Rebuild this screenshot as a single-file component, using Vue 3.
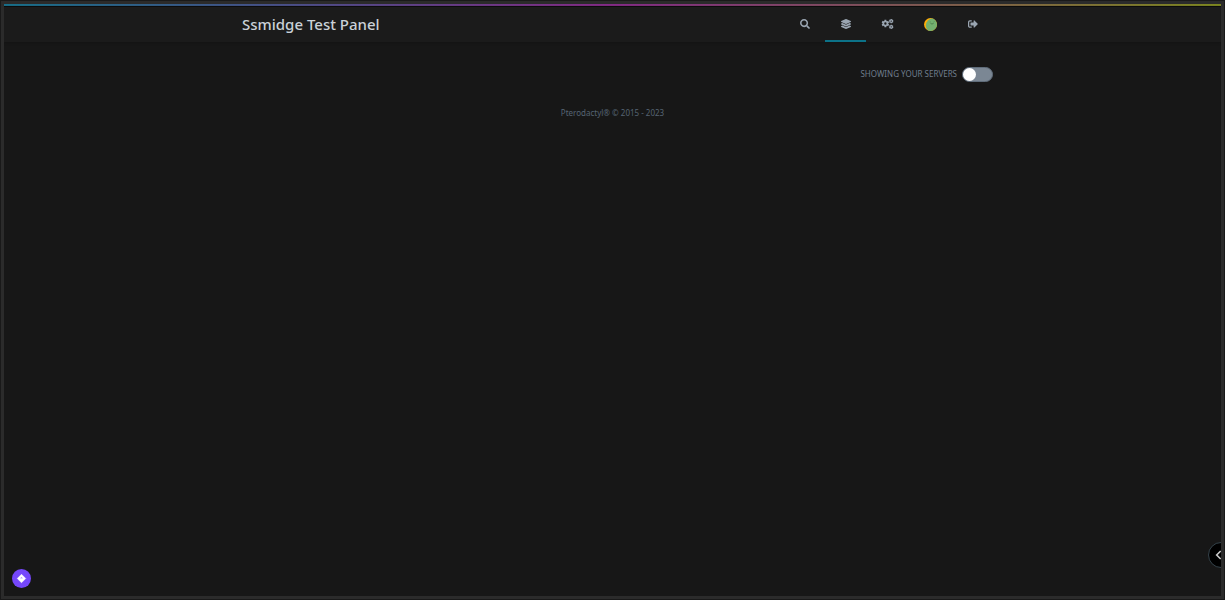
<script setup>
import { ref } from 'vue'

const showOthers = ref(false)
</script>

<template>
  <div class="frame">
    <div class="screen">
      <div class="progress"></div>
      <header class="topbar">
        <div class="container bar">
          <a href="#" class="brand">Ssmidge Test Panel</a>
          <nav class="nav" aria-label="Main">
            <button type="button" class="item" aria-label="Search">
              <svg viewBox="0 0 512 512" class="icon"><path d="M505 442.700L405.300 343c-4.500-4.500-10.600-7-17-7H372c27.600-35.300 44-79.700 44-128C416 93.100 322.900 0 208 0S0 93.100 0 208s93.100 208 208 208c48.300 0 92.700-16.400 128-44v16.300c0 6.400 2.500 12.500 7 17l99.700 99.700c9.400 9.400 24.600 9.400 33.900 0l28.300-28.300c9.400-9.400 9.400-24.600.1-34zM208 336c-70.700 0-128-57.200-128-128 0-70.700 57.200-128 128-128 70.700 0 128 57.200 128 128 0 70.700-57.200 128-128 128z" /></svg>
            </button>
            <a href="#" class="item active" aria-label="Dashboard">
              <svg viewBox="0 0 512 512" class="icon"><path d="M12.400 148l232.900 105.700c6.800 3.100 14.500 3.100 21.300 0L499.600 148c16.600-7.500 16.600-32.500 0-40L266.600 2.300a25.600 25.600 0 0 0-21.300 0L12.400 108c-16.500 7.500-16.500 32.500 0 40zm487.200 88.300l-58.100-26.300-161.600 73.300c-7.600 3.400-15.600 5.200-23.900 5.200s-16.300-1.800-23.900-5.200L70.500 210l-58.100 26.300c-16.500 7.500-16.500 32.500 0 40l232.900 105.600c6.800 3.100 14.500 3.100 21.300 0L499.600 276.300c16.500-7.500 16.500-32.500 0-40zm0 127.800l-57.900-26.200-161.900 73.400c-7.600 3.400-15.600 5.200-23.900 5.200s-16.300-1.800-23.900-5.200L70.300 337.900l-57.900 26.200c-16.500 7.500-16.500 32.500 0 40l232.900 105.600c6.800 3.100 14.500 3.100 21.300 0L499.600 404.100c16.500-7.500 16.500-32.500 0-40z" /></svg>
            </a>
            <a href="#" class="item admin" aria-label="Admin">
              <svg viewBox="0 0 640 512" class="icon wide"><path fill-rule="evenodd" d="M165 40h94l10 57 31 18 56-20 46 80-43 37v36l43 37-46 80-56-20-31 18-10 57h-94l-10-57-31-18-56 20-46-80 43-37v-36l-43-37 46-80 56 20 31-18zM212 170a60 60 0 1 0 0 120a60 60 0 1 0 0-120zM481 0h58l7 31 16 9 31-10 30 50-24 22v18l24 22-30 50-31-10-16 9-7 31h-58l-7-31-16-9-31 10-30-50 24-22v-18l-24-22 30-50 31 10 16-9zM510 79a32 32 0 1 0 0 64a32 32 0 1 0 0-64zM481 288h58l7 31 16 9 31-10 30 50-24 22v18l24 22-30 50-31-10-16 9-7 31h-58l-7-31-16-9-31 10-30-50 24-22v-18l-24-22 30-50 31 10 16-9zM510 367a32 32 0 1 0 0 64a32 32 0 1 0 0-64z" /></svg>
            </a>
            <a href="#" class="item account" aria-label="Account">
              <svg viewBox="0 0 36 36" class="avatar">
                <defs><clipPath id="face"><circle cx="18" cy="18" r="18" /></clipPath></defs>
                <g clip-path="url(#face)">
                  <rect width="36" height="36" fill="#ffad08" />
                  <circle cx="25" cy="21" r="20" fill="#73b06f" />
                  <path d="M18 15q4 4 9-1" fill="none" stroke="#315b36" stroke-width="1.500" />
                  <circle cx="17" cy="11" r="1" fill="#315b36" />
                  <circle cx="28" cy="9" r="1" fill="#315b36" />
                </g>
              </svg>
            </a>
            <button type="button" class="item" aria-label="Sign out">
              <svg viewBox="0 0 512 512" class="icon"><path d="M497 273L329 441c-15 15-41 4.500-41-17v-96H152c-13.300 0-24-10.700-24-24v-96c0-13.300 10.700-24 24-24h136V88c0-21.400 25.900-32 41-17l168 168c9.300 9.400 9.300 24.600 0 34zM192 436v-40c0-6.600-5.400-12-12-12H96c-17.700 0-32-14.300-32-32V160c0-17.700 14.300-32 32-32h84c6.600 0 12-5.400 12-12V76c0-6.600-5.400-12-12-12H96c-53 0-96 43-96 96v192c0 53 43 96 96 96h84c6.600 0 12-5.400 12-12z" /></svg>
            </button>
          </nav>
        </div>
      </header>
      <main class="container">
        <label class="filter">
          <span>Showing your servers</span>
          <input v-model="showOthers" type="checkbox" role="switch" class="switch" />
        </label>
        <footer class="footer"><a href="#">Pterodactyl®</a> © 2015 - 2023</footer>
      </main>
      <button type="button" class="fab" aria-label="Open tools">
        <svg viewBox="0 0 18 18"><path fill-rule="evenodd" d="M9 5L13 9 9 13 5 9zM9 7.500L7.500 9h3z" fill="#fff" stroke="#fff" stroke-width=".5" stroke-linejoin="round" /></svg>
      </button>
      <button type="button" class="drawer" aria-label="Open side panel">
        <svg viewBox="0 0 12 12"><path d="M8 3L5 6l3 3" fill="none" stroke="#c9c9c9" stroke-width="1.200" /></svg>
      </button>
    </div>
  </div>
</template>

<style>
body {
  margin: 0;
  background: #171717;
}
</style>

<style scoped>
* {
  box-sizing: border-box;
}
.frame {
  min-height: 100vh;
  display: flex;
  padding: 1px;
  background: #191919;
  font-family: "Noto Sans", sans-serif;
}
.screen {
  position: relative;
  flex: 1;
  overflow: hidden;
  border: 3px solid #2b2b2b;
  background: #171717;
}
.progress {
  height: 2px;
  background: linear-gradient(90deg, #18708a, #852b87 50%, #7e8820);
}
.topbar {
  background: #1b1b1b;
  border-top: 1px solid #0c0c0c;
  box-shadow: 0 1px 2px #141414;
}
.container {
  width: 100%;
  max-width: 761px;
  margin: 0 auto;
}
.bar {
  display: flex;
  justify-content: space-between;
  height: 35px;
}
.brand {
  padding-left: 10px;
  color: #cad1d8;
  font-size: 15px;
  font-weight: 500;
  line-height: 35px;
  text-decoration: none;
}
.nav {
  display: flex;
}
.item {
  display: flex;
  align-items: center;
  justify-content: center;
  width: 41px;
  padding: 0 0 1px;
  border: 0;
  background: none;
  color: #9aa5b1;
}
.item.active {
  box-shadow: inset 0 -2px #0c7288;
}
.item.admin {
  width: 42px;
}
.item.account {
  width: 44px;
}
.icon {
  width: 10px;
  height: 10px;
  fill: currentColor;
}
.icon.wide {
  width: 13px;
}
.avatar {
  width: 13px;
  height: 13px;
}
.filter {
  display: flex;
  align-items: center;
  justify-content: flex-end;
  gap: 5px;
  margin-top: 24px;
  color: #6f7d8c;
  font-size: 8px;
  line-height: 16px;
  text-transform: uppercase;
}
.switch {
  appearance: none;
  display: flex;
  width: 31px;
  height: 15px;
  margin: 0;
  border: 1px solid #606d7b;
  border-radius: 8px;
  background: #7b8794;
}
.switch::before {
  content: "";
  width: 13px;
  height: 13px;
  border-radius: 50%;
  background: #fff;
}
.switch:checked {
  justify-content: flex-end;
}
.footer {
  margin-top: 25px;
  color: #566473;
  font-size: 8px;
  line-height: 12px;
  text-align: center;
}
.footer a {
  color: inherit;
  text-decoration: none;
}
.fab {
  position: absolute;
  left: 8px;
  bottom: 8px;
  width: 19px;
  height: 19px;
  padding: 0;
  border: 0;
  border-radius: 50%;
  background: #7547fb;
}
.fab svg {
  display: block;
  width: 100%;
}
.drawer {
  position: absolute;
  right: -13px;
  bottom: 28px;
  width: 26px;
  height: 26px;
  padding: 0 0 0 1px;
  border: 1px solid #35434b;
  border-radius: 50%;
  background: #000;
}
.drawer svg {
  display: block;
  width: 16px;
}
</style>
